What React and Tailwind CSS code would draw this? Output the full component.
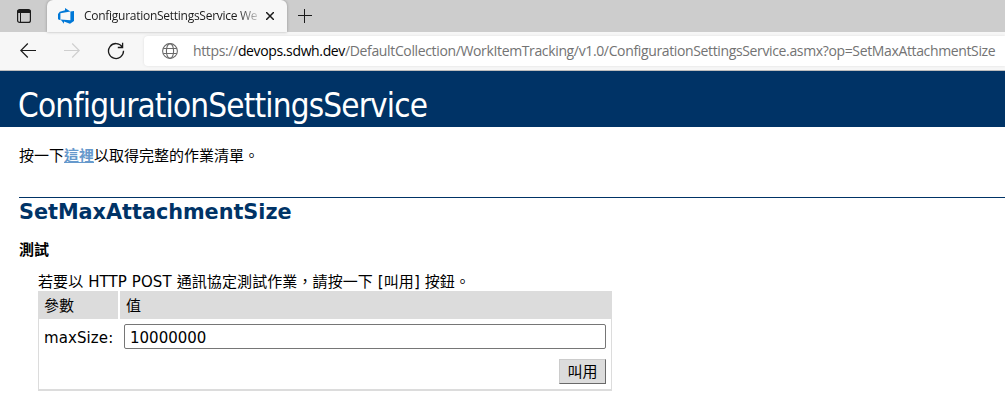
import React from "react";

function Toolbar() {
  return (
    <div className="flex h-[39px] items-center border-b border-[#bdbdbd] bg-[#f7f7f7]">
      <svg className="ml-5 h-4 w-4 shrink-0" viewBox="0 0 16 16" fill="none" stroke="#1b1b1b" strokeWidth="1.2">
        <path d="M16 7.500H.8M7.800.500.8 7.500l7 7" />
      </svg>
      <svg className="ml-7 h-4 w-4 shrink-0" viewBox="0 0 16 16" fill="none" stroke="#cfcfcf" strokeWidth="1.2">
        <path d="M0 7.500h15.200M8.200.500l7 7-7 7" />
      </svg>
      <svg className="ml-[27px] h-[18px] w-[18px] shrink-0" viewBox="0 0 18 18" fill="none" stroke="#1b1b1b" strokeWidth="1.3">
        <path d="M15.200 4.800A7.500 7.500 0 1 0 16.500 8.800M15.600.8v4.700h-4.800" />
      </svg>
      <div className="ml-[19px] flex h-[30px] flex-1 items-center rounded-l-[4px] bg-white shadow-[0_0_3px_rgba(0,0,0,0.1)]">
        <svg className="ml-[18px] h-4 w-4 shrink-0" viewBox="0 0 16 16" fill="none" stroke="#6b6b6b" strokeWidth="1.1">
          <circle cx="8" cy="8" r="7.4" />
          <ellipse cx="8" cy="8" rx="3.6" ry="7.4" />
          <path d="M1.2 5.5h13.6M1.2 10.5h13.6" />
        </svg>
        <span className="ml-[15px] whitespace-nowrap font-['Open_Sans','Noto_Sans',sans-serif] text-[14px] leading-5 tracking-[-0.36px] text-[#737373]">
          https://<span className="text-black">devops.sdwh.dev</span>/DefaultCollection/WorkItemTracking/v1.0/ConfigurationSettingsService.asmx?op=SetMaxAttachmentSize
        </span>
      </div>
    </div>
  );
}

function TabStrip() {
  return (
    <div className="flex h-8 bg-[#cdcdcd]">
      <div className="flex w-[47px] items-center justify-center">
        <svg className="h-[14px] w-[14px]" viewBox="0 0 14 14" fill="none" stroke="#1b1b1b" strokeWidth="1.2">
          <rect x=".6" y=".6" width="12.8" height="12.8" rx="2" />
          <path d="M.6 2.5h12.8" strokeWidth="3" />
          <path d="M3.5 4v9.4" strokeWidth="1" />
        </svg>
      </div>
      <div className="flex w-[240px] items-center rounded-t-[6px] bg-[#f7f7f7] shadow-[0_0_3px_rgba(0,0,0,0.3)]">
        <svg className="ml-[11px] h-4 w-4 shrink-0" viewBox="0 0 16 16" fill="#0078d7">
          <path d="M16 3v10l-4 2.800-6-2.200v2.200L2.600 11.500l9.800.8V3.400ZM12.400 3.400 7 0v2.200L1.800 3.800 0 6v5.200l2.400 1V5.300Z" />
        </svg>
        <span className="ml-[10px] w-[174px] whitespace-nowrap bg-gradient-to-r from-[#1b1b1b] from-[88%] to-[#d0d0d0] bg-clip-text font-['Open_Sans','Noto_Sans',sans-serif] text-[12px] leading-5 tracking-[-0.27px] text-transparent">
          ConfigurationSettingsService We
        </span>
        <svg className="ml-2 h-2 w-2 shrink-0" viewBox="0 0 8 8" stroke="#1b1b1b" strokeWidth="1.5">
          <path d="m0 0 8 8M8 0 0 8" />
        </svg>
      </div>
      <svg className="ml-[11px] mt-[9px] h-[14px] w-[14px]" viewBox="0 0 14 14" stroke="#1b1b1b" strokeWidth="1">
        <path d="M0 6.500h14M6.500 0v14" />
      </svg>
    </div>
  );
}

export default function App() {
  return (
    <div className="h-[404px] w-[1005px] overflow-hidden bg-white font-['DejaVu_Sans','Noto_Sans_CJK_TC',sans-serif] text-[15px] text-black">
      <TabStrip />
      <Toolbar />
      <header className="flex h-14 items-center bg-[#003366] pl-[18px] pt-[14px]">
        <h1 className="whitespace-nowrap font-['DejaVu_Sans_Condensed','DejaVu_Sans',sans-serif] text-[33px] leading-10 tracking-[-0.85px] text-white">ConfigurationSettingsService</h1>
      </header>
      <main className="pl-[19px]">
        <p className="pt-[18px] leading-[22px]">
          按一下<a className="font-bold text-[#6699cc] underline">這裡</a>以取得完整的作業清單。
        </p>
        <section className="mt-[30px] border-t border-[#003366]">
          <h2 className="pt-px text-[20.8px] font-bold leading-[27px] tracking-[-0.03px] text-[#003366]">SetMaxAttachmentSize</h2>
          <h3 className="mt-[13px] text-[15px] font-bold leading-[22px]">測試</h3>
          <div className="ml-[19px] mt-[11px] w-[574px]">
            <p className="h-[19px] whitespace-nowrap leading-[20px] tracking-[0.1px]">若要以 HTTP POST 通訊協定測試作業，請按一下 [叫用] 按鈕。</p>
            <div className="h-[100px] border-x border-b-2 border-[#dcdcdc]">
              <div className="-mx-px flex h-7 gap-[2px] leading-[30px]">
                <div className="w-20 bg-[#dcdcdc] pl-[6px]">參數</div>
                <div className="flex-1 bg-[#dcdcdc] pl-[6px]">值</div>
              </div>
              <div className="flex pt-[5px]">
                <span className="w-[85px] pl-[5px] leading-[29px] tracking-[0.1px]">maxSize:</span>
                <div className="h-[25px] w-[482px] rounded-[2px] border border-[#767676] pl-[5px] leading-[26px]">10000000</div>
              </div>
              <div className="flex justify-end pr-[5px] pt-[6px]">
                <button className="h-[25px] w-[47px] border border-b-[#696969] border-l-[#cccccc] border-r-[#696969] border-t-[#cccccc] bg-[#dcdcdc] pt-px leading-[23px]">叫用</button>
              </div>
            </div>
          </div>
        </section>
      </main>
    </div>
  );
}
